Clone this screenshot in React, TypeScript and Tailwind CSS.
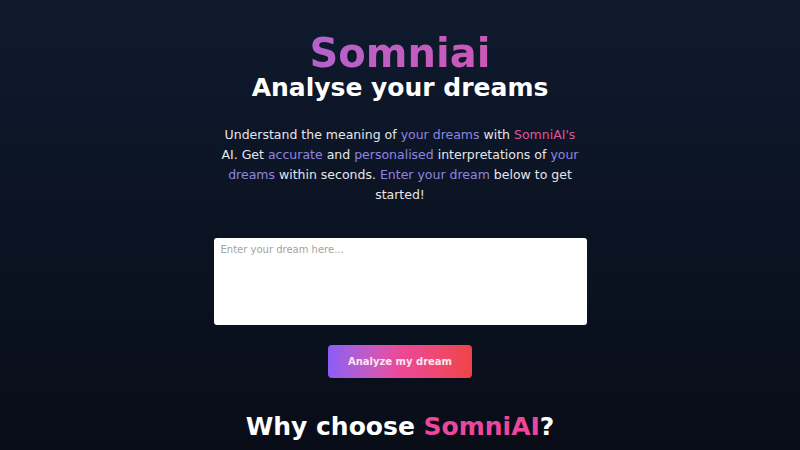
import React from "react";

export default function App() {
  const accent = "text-[#8e85e0]";
  return (
    <div
      className="w-full min-h-[450px] h-[450px] overflow-hidden bg-gradient-to-b from-[#0f1a2e] to-[#080d18] flex flex-col items-center text-white"
      style={{ fontFamily: '"DejaVu Sans", sans-serif' }}
    >
      <h1 className="mt-[33px] text-[40px] leading-[40px] font-bold bg-gradient-to-r from-[#b462ca] to-[#cc58b6] bg-clip-text text-transparent">
        Somniai
      </h1>
      <h2 className="text-[25px] leading-[30px] font-bold text-white">
        Analyse your dreams
      </h2>
      <p className="mt-[22px] w-[362px] text-center text-[12.5px] leading-[20px] text-[#e5e7eb]">
        Understand the meaning of <span className={accent}>your dreams</span> with{" "}
        <span className="text-[#e05599]">SomniAI's</span> AI. Get{" "}
        <span className={accent}>accurate</span> and{" "}
        <span className={accent}>personalised</span> interpretations of{" "}
        <span className={accent}>your dreams</span> within seconds.{" "}
        <span className={accent}>Enter your dream</span> below to get started!
      </p>
      <textarea
        placeholder="Enter your dream here..."
        className="mt-[33px] w-[373px] h-[87px] rounded-[3px] bg-white px-[7px] py-[4px] text-[10px] leading-[15px] text-gray-800 placeholder:text-[#a3a3a3] resize-none outline-none"
        style={{ fontFamily: '"DejaVu Sans", sans-serif' }}
      />
      <button className="mt-[20px] w-[144px] h-[33px] rounded-[4px] bg-gradient-to-r from-[#8b5cf6] via-[#ec4899] to-[#ef4444] text-[10px] font-bold text-[#fde7f3]">
        Analyze my dream
      </button>
      <h2 className="mt-[34px] text-[25px] leading-[30px] font-bold text-white">
        Why choose <span className="text-[#ec4899]">SomniAI</span>?
      </h2>
    </div>
  );
}
